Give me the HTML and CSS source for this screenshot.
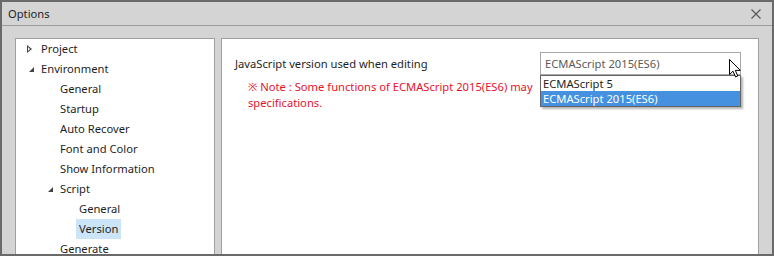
FILE: index.html
```html
<!DOCTYPE html>
<html>
  <head>
    <title>Options</title>
    <link rel="stylesheet" href="styles.css">
  </head>
  <body>
    <div class="window">
      <div class="titlebar">
        <span class="title">Options</span>
        <svg class="close" width="10" height="10" viewBox="0 0 10 10">
          <path d="M0.5 0.5 L9.5 9.5 M9.5 0.5 L0.5 9.5" stroke="#5a5a5a" stroke-width="1.2" fill="none"/>
        </svg>
      </div>
      <div class="body">
        <div class="tree">
          <ul class="level">
            <li>
              <div class="row"><span class="toggle closed"></span>Project</div>
            </li>
            <li>
              <div class="row"><span class="toggle open"></span>Environment</div>
              <ul class="level sub">
                <li><div class="row"><span class="toggle"></span>General</div></li>
                <li><div class="row"><span class="toggle"></span>Startup</div></li>
                <li><div class="row"><span class="toggle"></span>Auto Recover</div></li>
                <li><div class="row"><span class="toggle"></span>Font and Color</div></li>
                <li><div class="row"><span class="toggle"></span>Show Information</div></li>
                <li>
                  <div class="row"><span class="toggle open"></span>Script</div>
                  <ul class="level sub">
                    <li><div class="row"><span class="toggle"></span>General</div></li>
                    <li><div class="row"><span class="toggle"></span><span class="selected">Version</span></div></li>
                  </ul>
                </li>
                <li><div class="row"><span class="toggle"></span>Generate</div></li>
              </ul>
            </li>
          </ul>
        </div>
        <div class="content">
          <div class="setting">
            <span class="label">JavaScript version used when editing</span>
            <div class="combo">
              <span class="combo-value">ECMAScript 2015(ES6)</span>
              <ul class="combo-list">
                <li>ECMAScript 5</li>
                <li class="active">ECMAScript 2015(ES6)</li>
              </ul>
              <svg class="cursor" width="13" height="19" viewBox="0 0 13 19">
                <path d="M0.5 0.5 L0.5 15.5 L4 12.2 L6.6 18 L8.8 17 L6.3 11.4 L11.3 11.4 Z" fill="#fff" stroke="#000" stroke-width="1" stroke-linejoin="miter"/>
              </svg>
            </div>
          </div>
          <p class="note">
            <span class="line">&#8251; Note : Some functions of ECMAScript 2015(ES6) may</span>
            <span class="line">specifications.</span>
          </p>
        </div>
      </div>
    </div>
  </body>
</html>
```

FILE: styles.css
```css
body {
  margin: 0;
  font-family: "Noto Sans", sans-serif;
  font-size: 11.2px;
  color: #1e1e1e;
}

.window {
  width: 774px;
  height: 256px;
  box-sizing: border-box;
  border: 2px solid #6a6a6a;
  background-color: #d4d4d4;
  display: flex;
  flex-direction: column;
  overflow: hidden;
}

.titlebar {
  height: 23px;
  flex: none;
  display: flex;
  align-items: center;
  justify-content: space-between;
  padding: 0 11px 0 6px;
  border-bottom: 1px solid #9c9c9c;
}

.close {
  display: block;
  margin-top: 1px;
}

.body {
  flex: 1;
  display: flex;
  gap: 6px;
  padding: 12px 13px 0 13px;
  min-height: 0;
}

.tree {
  width: 200px;
  flex: none;
  box-sizing: border-box;
  height: 240px;
  background-color: #fff;
  border: 1px solid #a0a0a0;
}

.level {
  list-style-type: none;
  margin: 0;
  padding: 0 0 0 6px;
}

.level.sub {
  padding-left: 19px;
}

.row {
  height: 20px;
  line-height: 20px;
  display: flex;
  align-items: center;
  white-space: nowrap;
}

.toggle {
  width: 19px;
  height: 20px;
  flex: none;
  position: relative;
}

.toggle.closed::before {
  content: "";
  position: absolute;
  left: 5px;
  top: 6px;
  width: 0;
  height: 0;
  border-top: 4px solid transparent;
  border-bottom: 4px solid transparent;
  border-left: 5px solid #444;
}

.toggle.closed::after {
  content: "";
  position: absolute;
  left: 6px;
  top: 8px;
  width: 0;
  height: 0;
  border-top: 2px solid transparent;
  border-bottom: 2px solid transparent;
  border-left: 2px solid #fff;
}

.toggle.open::before {
  content: "";
  position: absolute;
  left: 7px;
  top: 8px;
  width: 0;
  height: 0;
  border-left: 5px solid transparent;
  border-bottom: 5px solid #444;
}

.selected {
  background-color: #cce4f7;
  margin-left: -3px;
  padding: 0 3px;
}

.content {
  flex: 1;
  min-width: 0;
  box-sizing: border-box;
  height: 240px;
  background-color: #fff;
  border: 1px solid #a0a0a0;
  padding: 13px 17px 0 13px;
}

.setting {
  display: flex;
  align-items: center;
  height: 23px;
}

.label {
  flex: 1;
}

.combo {
  width: 201px;
  height: 23px;
  flex: none;
  box-sizing: border-box;
  border: 1px solid #a8a8a8;
  position: relative;
  padding-left: 4px;
  line-height: 21px;
  color: #5a5a5a;
}

.combo-list {
  position: absolute;
  top: 22px;
  left: -1px;
  width: 201px;
  box-sizing: border-box;
  margin: 0;
  padding: 0;
  list-style-type: none;
  background-color: #fff;
  border: 1px solid #646464;
  box-shadow: 2px 2px 2px rgba(0, 0, 0, 0.3);
  color: #1e1e1e;
  z-index: 2;
}

.combo-list li {
  height: 15px;
  line-height: 15px;
  padding-left: 2px;
}

.combo-list li.active {
  background-color: #4591e0;
  color: #fff;
}

.cursor {
  position: absolute;
  left: 188px;
  top: 6px;
  z-index: 3;
}

.note {
  margin: 4px 0 0 13px;
  color: #e8112d;
  line-height: 16px;
}

.note .line {
  display: block;
  white-space: nowrap;
}
```
